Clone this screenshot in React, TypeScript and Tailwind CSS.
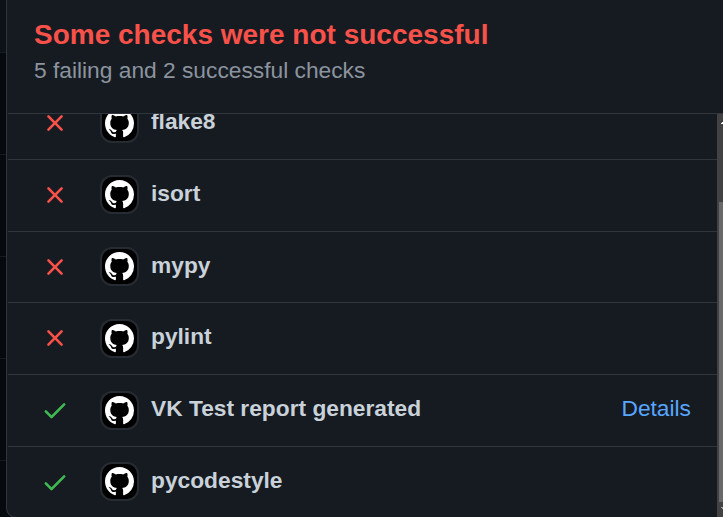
type Check = { name: string; ok: boolean; details?: boolean };

const checks: Check[] = [
  { name: "flake8", ok: false },
  { name: "isort", ok: false },
  { name: "mypy", ok: false },
  { name: "pylint", ok: false },
  { name: "VK Test report generated", ok: true, details: true },
  { name: "pycodestyle", ok: true },
];

function StatusIcon({ ok }: { ok: boolean }) {
  return (
    <svg viewBox="0 0 16 16" className={`mt-[21px] size-7 shrink-0 ${ok ? "fill-[#3fb950]" : "fill-[#f85149]"}`}>
      {ok ? (
        <path d="M13.78 4.22a.75.75 0 0 1 0 1.06l-7.25 7.25a.75.75 0 0 1-1.06 0L2.22 9.28a.751.751 0 0 1 .018-1.042.751.751 0 0 1 1.042-.018L6 10.94l6.72-6.72a.75.75 0 0 1 1.06 0Z" />
      ) : (
        <path d="M3.72 3.72a.75.75 0 0 1 1.06 0L8 6.94l3.22-3.22a.749.749 0 0 1 1.275.326.749.749 0 0 1-.215.734L9.06 8l3.22 3.22a.749.749 0 0 1-.326 1.275.749.749 0 0 1-.734-.215L8 9.06l-3.22 3.22a.751.751 0 0 1-1.042-.018.751.751 0 0 1-.018-1.042L6.94 8 3.72 4.78a.75.75 0 0 1 0-1.06Z" />
      )}
    </svg>
  );
}

function Avatar() {
  return (
    <span className="ml-[31px] mt-[15.5px] flex size-[39px] shrink-0 items-center justify-center rounded-[12px] border-2 border-[#272c33] bg-black">
      <svg viewBox="0 0 16 16" className="size-[29px] shrink-0 fill-white">
        <path d="M8 0C3.58 0 0 3.58 0 8c0 3.54 2.29 6.53 5.47 7.59.4.07.55-.17.55-.38 0-.19-.01-.82-.01-1.49-2.01.37-2.53-.49-2.69-.94-.09-.23-.48-.94-.82-1.13-.28-.15-.68-.52-.01-.53.63-.01 1.08.58 1.23.82.72 1.21 1.87.87 2.33.66.07-.52.28-.87.51-1.07-1.78-.2-3.64-.89-3.64-3.95 0-.87.31-1.59.82-2.15-.08-.2-.36-1.02.08-2.12 0 0 .67-.21 2.2.82.64-.18 1.32-.27 2-.27.68 0 1.36.09 2 .27 1.53-1.04 2.2-.82 2.2-.82.44 1.1.16 1.92.08 2.12.51.56.82 1.27.82 2.15 0 3.07-1.87 3.75-3.65 3.95.29.25.54.73.54 1.48 0 1.07-.01 1.93-.01 2.2 0 .21.15.46.55.38A8.013 8.013 0 0016 8c0-4.42-3.58-8-8-8z" />
      </svg>
    </span>
  );
}

function CheckRow({ check }: { check: Check }) {
  return (
    <li className="flex h-[71.75px] items-start border-b border-[#30363d] pl-[33px] pr-[26px] last:border-b-0">
      <StatusIcon ok={check.ok} />
      <Avatar />
      <span className="ml-3 mt-[19px] grow text-[22.75px] font-bold leading-7 text-[#c9d1d9]">{check.name}</span>
      {check.details && <a className="mt-[19px] text-[22.75px] leading-7 text-[#58a6ff]">Details</a>}
    </li>
  );
}

function Scrollbar() {
  return (
    <div className="flex w-[6px] shrink-0 flex-col items-end bg-[#424242]">
      <div className="flex h-[88px] w-full justify-end pt-2">
        <svg viewBox="0 0 2 2" className="size-[2px] fill-white">
          <path d="M1 0h1v2H0V1h1z" />
        </svg>
      </div>
      <div className="h-[300px] w-1 bg-[#686868]" />
      <div className="flex grow pt-[5px]">
        <svg viewBox="0 0 2 2" className="size-[2px] fill-[#a0a0a0]">
          <path d="M0 0h2v2H1V1H0z" />
        </svg>
      </div>
    </div>
  );
}

export default function App() {
  return (
    <div className="flex h-[517px] w-[723px] overflow-hidden bg-[#06090e] font-['Liberation_Sans',Arial,sans-serif]">
      <div className="w-[6px] shrink-0">
        <div className="h-[53px] border-b border-[#171b21] bg-[#0d1118]" />
        <div className="h-[102px] border-b border-[#171b21]" />
        <div className="h-[102px] border-b border-[#171b21]" />
        <div className="h-[102px] border-b border-[#171b21]" />
        <div className="h-[102px] border-b border-[#171b21]" />
      </div>
      <section className="flex h-[518px] grow flex-col overflow-hidden rounded-bl-[10px] border-b border-l border-[#30363d] bg-[#161b22]">
        <header className="ml-px h-[114px] shrink-0 border-b border-[#30363d] pl-[26px] pt-[19px]">
          <h1 className="text-[28px] font-bold leading-8 text-[#f85149]">Some checks were not successful</h1>
          <p className="mt-[5px] text-[22.75px] leading-7 text-[#8b949e]">5 failing and 2 successful checks</p>
        </header>
        <div className="flex min-h-0 grow">
          <div className="ml-px grow overflow-hidden">
            <ul className="-mt-[26px]">
              {checks.map((check) => (
                <CheckRow key={check.name} check={check} />
              ))}
            </ul>
          </div>
          <Scrollbar />
        </div>
      </section>
    </div>
  );
}
